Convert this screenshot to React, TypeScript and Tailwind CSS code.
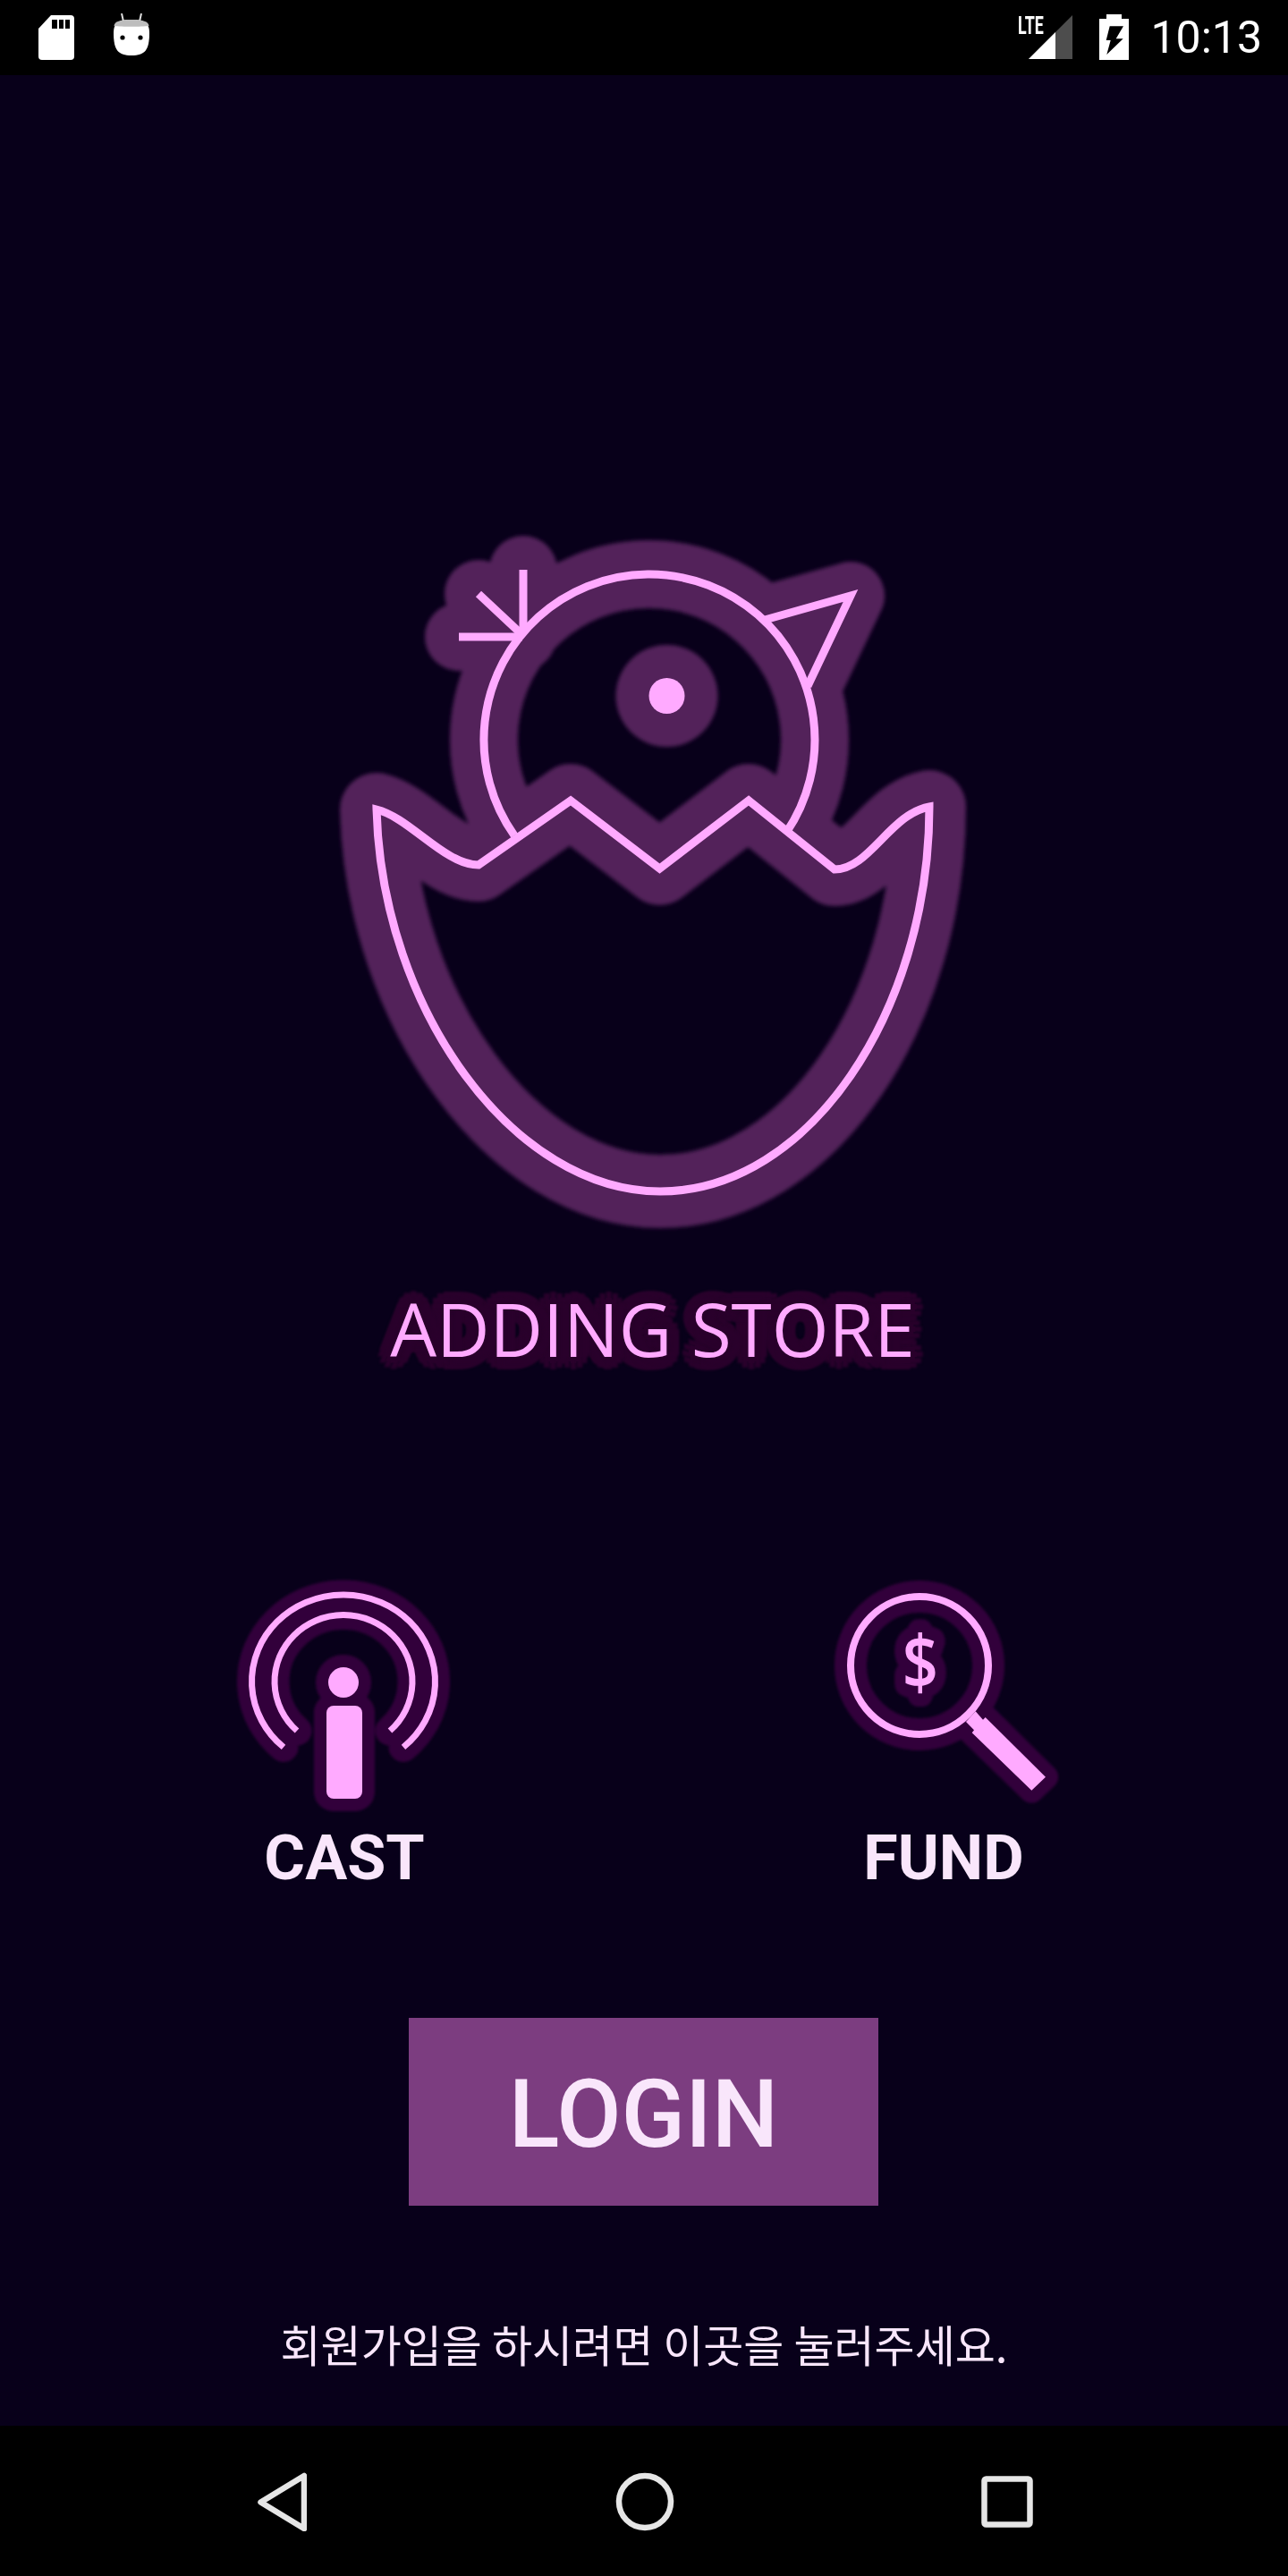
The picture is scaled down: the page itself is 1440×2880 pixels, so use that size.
const pink = '#ffaaff';
const logoHalo = '#52215a';
const iconHalo = '#33003a';

const headArc = 'M575 934 A185 185 0 1 1 879 931';
const shellPath =
  'M421 905 C458 914 497 967 535 967 L638 895 L737.5 971 L837 895 L933 972 C972 972 995 910 1039 902 C1039 1130 905 1332 738 1332 C575 1332 427 1130 421 905 Z';
const lines = ['M585 637 V708', 'M513 712 H584', 'M535 664 L582 708', 'M855 693 L951 666 L903 767'];

const LogoStrokes = ({ color, width, shell, cap }: { color: string; width: number; shell: number; cap: 'round' | 'butt' }) => (
  <g fill="none" stroke={color} strokeWidth={width} strokeLinecap={cap} strokeLinejoin={cap === 'round' ? 'round' : 'miter'}>
    <path d={headArc} />
    {lines.map((d) => (
      <path key={d} d={d} />
    ))}
    <path d={shellPath} strokeWidth={shell} />
  </g>
);

const Logo = () => (
  <svg width="720" height="800" viewBox="370 590 720 800" className="block">
    <defs>
      <filter id="soft" x="-10%" y="-10%" width="120%" height="120%">
        <feGaussianBlur stdDeviation="2" />
      </filter>
    </defs>
    <g filter="url(#soft)">
      <LogoStrokes color={logoHalo} width={76} shell={82} cap="round" />
      <circle cx="745.5" cy="778" r="57" fill={logoHalo} />
    </g>
    <LogoStrokes color={pink} width={9} shell={9} cap="butt" />
    <circle cx="745.5" cy="778" r="20" fill={pink} />
  </svg>
);

const castArcs = [
  { d: 'M317 1953.4 A102.5 97 0 1 1 451 1953.4', w: 7 },
  { d: 'M332 1935 A77 74.5 0 1 1 436 1935', w: 7 },
];

const CastIcon = () => (
  <svg width="270" height="270" viewBox="250 1760 270 270" className="block">
    <defs>
      <filter id="softCast" x="-10%" y="-10%" width="120%" height="120%">
        <feGaussianBlur stdDeviation="1.5" />
      </filter>
    </defs>
    <g filter="url(#softCast)" fill={iconHalo}>
      {castArcs.map((a) => (
        <path key={a.d} d={a.d} fill="none" stroke={iconHalo} strokeWidth={a.w + 26} strokeLinecap="round" />
      ))}
      <circle cx="384" cy="1881" r="31" />
      <rect x="351" y="1893" width="68" height="132" rx="22" />
    </g>
    {castArcs.map((a) => (
      <path key={a.d} d={a.d} fill="none" stroke={pink} strokeWidth={a.w} />
    ))}
    <circle cx="384" cy="1881" r="17" fill={pink} />
    <rect x="365" y="1907" width="40" height="104" rx="8" fill={pink} />
  </svg>
);

const handle = '1090.7,1913.3 1099,1922.7 1101.7,1920 1169,1986.7 1153.3,2001.7 1086.7,1937.3 1089,1934.3 1080,1925';

const FundIcon = () => (
  <svg width="270" height="270" viewBox="920 1760 270 270" className="block">
    <defs>
      <filter id="softFund" x="-10%" y="-10%" width="120%" height="120%">
        <feGaussianBlur stdDeviation="1.5" />
      </filter>
    </defs>
    <g filter="url(#softFund)">
      <circle cx="1028" cy="1862" r="77" fill="none" stroke={iconHalo} strokeWidth="36" />
      <polygon points={handle} fill={iconHalo} stroke={iconHalo} strokeWidth="28" strokeLinejoin="round" />
      <text
        transform="translate(1029 1888) scale(0.88 1.05)"
        textAnchor="middle"
        fontFamily="'Open Sans', sans-serif"
        fontWeight="600"
        fontSize="80"
        fill={iconHalo}
        stroke={iconHalo}
        strokeWidth="28"
        strokeLinejoin="round"
      >
        $
      </text>
    </g>
    <circle cx="1028" cy="1862" r="77" fill="none" stroke={pink} strokeWidth="8" />
    <polygon points={handle} fill={pink} />
    <text
      transform="translate(1029 1888) scale(0.88 1.05)"
      textAnchor="middle"
      fontFamily="'Open Sans', sans-serif"
      fontWeight="600"
      fontSize="80"
      fill={pink}
    >
      $
    </text>
  </svg>
);

const StatusBar = () => (
  <div className="flex h-[84px] items-start bg-black pl-[43px] pr-[29px]">
    {/* sd card */}
    <svg width="40" height="50" viewBox="43 17 40 50" className="mt-[17px]">
      <path d="M57 17 H79 Q83 17 83 21 V63 Q83 67 79 67 H47 Q43 67 43 63 V32 Z" fill="#fff" />
      <path d="M58 22 H64 V32 H58 Z M66 22 H71 V32 H66 Z M73 22 H78 V32 H73 Z" fill="#000" />
    </svg>
    {/* android head */}
    <svg width="40" height="48" viewBox="127 15 40 48" className="ml-[44px] mt-[15px]">
      <path d="M136 15 L138 24 M158 15 L156 24" stroke="#ddd" strokeWidth="2" fill="none" />
      <path d="M147 22 C160 22 167 24 167 37 C167 56 162 62 147 62 C132 62 127 56 127 37 C127 24 134 22 147 22 Z" fill="#fff" />
      <path d="M127.5 29 C128 24 134 22 147 22 C160 22 166 24 166.5 29 C158 30 136 30 127.5 29 Z" fill="#bdbdbd" />
      <circle cx="137" cy="42" r="2.6" fill="#000" />
      <circle cx="157" cy="42" r="2.6" fill="#000" />
    </svg>
    <div className="ml-auto flex items-start">
      <span className="mt-[13px] w-[12px] origin-left scale-x-[0.66] font-['Roboto',sans-serif] text-[27px] font-bold leading-[32px] text-white">
        LTE
      </span>
      <svg width="49" height="49" viewBox="1150 17 49 49" className="ml-0 mt-[17px]">
        <path d="M1150 66 L1199 17 V66 Z" fill="#4d4d4d" />
        <path d="M1150 66 L1180 36 V66 Z" fill="#fff" />
      </svg>
      <svg width="33" height="51" viewBox="1229 16 33 51" className="ml-[30px] mt-[16px]">
        <path d="M1237 16 H1254 V21 H1262 V67 H1229 V21 H1237 Z" fill="#fff" />
        <path d="M1240.7 29.3 H1256 L1247.7 43.3 H1255.7 L1237.3 61 L1241.7 45 H1236.7 Z" fill="#000" />
      </svg>
      <span className="ml-[24px] font-['Roboto',sans-serif] text-[50px] font-normal leading-[84px] text-white">10:13</span>
    </div>
  </div>
);

const NavBar = () => (
  <div className="flex h-[168px] items-start bg-black pl-[288px] pt-[52px]">
    <svg width="55" height="66" viewBox="288 2764 55 66">
      <path d="M340 2768 V2827 L291.5 2797.5 Z" fill="none" stroke="#e6e6e6" strokeWidth="6.5" strokeLinejoin="round" />
    </svg>
    <svg width="66" height="66" viewBox="688 2764 66 66" className="ml-[345px]">
      <circle cx="721" cy="2797" r="29" fill="none" stroke="#e6e6e6" strokeWidth="6.5" />
    </svg>
    <svg width="58" height="58" viewBox="1097 2768 58 58" className="ml-[343px] mt-[4px]">
      <rect x="1100.5" y="2771.5" width="51" height="51" rx="2" fill="none" stroke="#e6e6e6" strokeWidth="6.5" />
    </svg>
  </div>
);

export default function App() {
  return (
    <div className="flex h-[2880px] w-[1440px] flex-col bg-[#08001a]">
      <StatusBar />
      <main className="flex flex-1 flex-col">
        <div className="ml-[370px] mt-[506px]">
          <Logo />
        </div>

        <h1 className="ml-[19px] mt-[40px] text-center font-['Open_Sans',sans-serif] text-[82px] font-medium leading-[110px] text-[#ffaaff] [text-shadow:14px_0_3px_#2a002c,12px_7px_3px_#2a002c,7px_12px_3px_#2a002c,0_14px_3px_#2a002c,-7px_12px_3px_#2a002c,-12px_7px_3px_#2a002c,-14px_0_3px_#2a002c,-12px_-7px_3px_#2a002c,-7px_-12px_3px_#2a002c,0_-14px_3px_#2a002c,7px_-12px_3px_#2a002c,12px_-7px_3px_#2a002c,7px_0_0_#2a002c,0_7px_0_#2a002c,-7px_0_0_#2a002c,0_-7px_0_#2a002c,5px_5px_0_#2a002c,-5px_5px_0_#2a002c,-5px_-5px_0_#2a002c,5px_-5px_0_#2a002c]">
          ADDING STORE
        </h1>

        <div className="ml-[250px] mt-[220px] flex gap-[400px]">
          {[
            { label: 'CAST', icon: <CastIcon /> },
            { label: 'FUND', icon: <FundIcon /> },
          ].map(({ label, icon }) => (
            <div key={label} className="flex h-[357px] w-[270px] flex-col items-center">
              {icon}
              <span className="mt-[8px] font-['Roboto',sans-serif] text-[70px] font-bold leading-[79px] text-[#f9e6fb]">
                {label}
              </span>
            </div>
          ))}
        </div>

        <button className="ml-[457px] mt-[139px] h-[210px] w-[525px] bg-[#7c3d80] pt-[8px] font-['Roboto',sans-serif] text-[105px] font-medium text-[#f9e6fb]">
          LOGIN
        </button>

        <p className="mt-[124px] text-center font-['Noto_Sans_CJK_KR',sans-serif] text-[49px] font-normal leading-[60px] text-[#f9e6fb]">
          회원가입을 하시려면 이곳을 눌러주세요.
        </p>
      </main>
      <NavBar />
    </div>
  );
}
